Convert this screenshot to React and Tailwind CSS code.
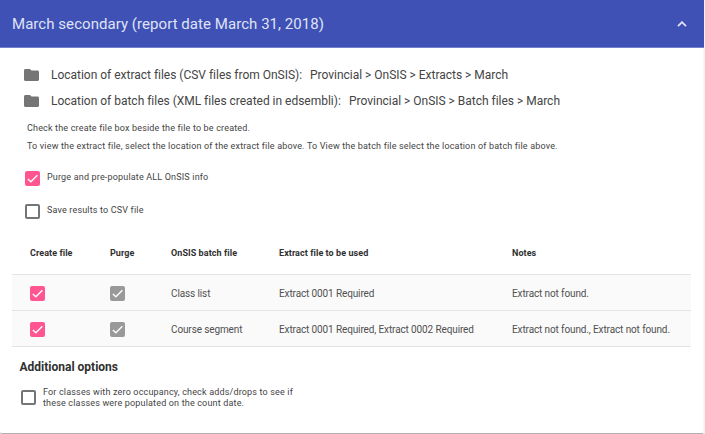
const tick = 'M4.6 12.7 9.400 17.2 19.8 6.8';

function Checkbox({ checked, muted }) {
  if (!checked) {
    return <span className="block size-[15px] shrink-0 rounded-[2px] border-2 border-[#757575] bg-white" />;
  }
  return (
    <span className={`block size-[15px] shrink-0 rounded-[2px] ${muted ? 'bg-[#999999]' : 'bg-[#ff5590]'}`}>
      <svg viewBox="0 0 24 24" className="size-[15px]" fill="none" stroke="#fafafa" strokeWidth="2.4">
        <path d={tick} />
      </svg>
    </span>
  );
}

function Folder() {
  return (
    <svg viewBox="2 4 20 16" preserveAspectRatio="none" className="h-3 w-[15px] shrink-0" fill="#757575">
      <path d="M10 4H4c-1.1 0-2 .9-2 2v12c0 1.1.9 2 2 2h16c1.1 0 2-.9 2-2V8c0-1.100-.9-2-2-2h-8l-2-2z" />
    </svg>
  );
}

const locations = [
  { label: 'Location of extract files (CSV files from OnSIS):', path: 'Provincial > OnSIS > Extracts > March', left: 'w-[259px]' },
  { label: 'Location of batch files (XML files created in edsembli):', path: 'Provincial > OnSIS > Batch files > March', left: 'w-[298px]' },
];

const rows = [
  ['Class list', 'Extract 0001 Required', 'Extract not found.'],
  ['Course segment', 'Extract 0001 Required, Extract 0002 Required', 'Extract not found., Extract not found.'],
];

const columns = 'grid grid-cols-[80px_61px_108px_233px_1fr] items-center pl-[18px]';

export default function App() {
  return (
    <div className="h-[434px] w-[705px] overflow-hidden bg-[#f0f0f0] font-['Roboto',sans-serif] whitespace-nowrap text-[#444444]">
      <section className="flex h-[434px] w-[704px] flex-col rounded-b-[2px] border-r border-b border-r-[#f5f5f5] border-b-[#b0b0b0] bg-white">
        <header className="flex h-12 w-[704px] shrink-0 items-center justify-between border-b border-[#7482d0] bg-[#3f51b5] pr-[17px] pl-3 text-[#dfe3f5]">
          <h1 className="pt-px text-[15px] tracking-[0.05px]">March secondary (report date March 31, 2018)</h1>
          <svg viewBox="0 0 10 6" className="h-1.5 w-2.5" fill="none" stroke="currentColor" strokeWidth="1.8">
            <path d="m1 5.200 4-4 4 4" />
          </svg>
        </header>
        <div className="mt-[14px] flex flex-col pl-6">
          {locations.map((l) => (
            <div key={l.label} className="flex h-[26px] items-center text-[12px] tracking-[-0.015px]">
              <Folder />
              <span className={`ml-3 ${l.left}`}>{l.label}</span>
              <span>{l.path}</span>
            </div>
          ))}
        </div>
        <div className="mt-[5px] pl-[27px] text-[9px] leading-[18px] tracking-[0.17px]">
          <p>Check the create file box beside the file to be created.</p>
          <p>To view the extract file, select the location of the extract file above. To View the batch file select the location of batch file above.</p>
        </div>
        <div className="mt-[16px] flex flex-col gap-[18px] pl-[25px] text-[9px] leading-[12px] tracking-[0.17px]">
          <label className="flex gap-[7px]"><Checkbox checked /><span>Purge and pre-populate ALL OnSIS info</span></label>
          <label className="flex gap-[7px]"><Checkbox /><span>Save results to CSV file</span></label>
        </div>
        <div className="mt-[14px] mr-3 ml-3">
          <div className={`${columns} h-[41px] pt-px text-[9px] font-bold tracking-[0.07px] text-[#303030]`}>
            <span>Create file</span><span>Purge</span><span>OnSIS batch file</span><span>Extract file to be used</span><span>Notes</span>
          </div>
          {rows.map((r) => (
            <div key={r[0]} className={`${columns} h-9 border-t border-[#e4e4e4] bg-[#fafafa] pt-px text-[10px] tracking-[-0.12px] text-[#505050]`}>
              <Checkbox checked /><Checkbox checked muted /><span>{r[0]}</span><span>{r[1]}</span><span>{r[2]}</span>
            </div>
          ))}
          <div className="h-px bg-[#e4e4e4]" />
        </div>
        <h2 className="mt-3 pl-[19.5px] text-[12px] leading-4 font-bold text-[#303030]">Additional options</h2>
        <label className="mt-3 flex gap-[7px] pl-[21px] text-[9px] leading-[11px] tracking-[0.17px]">
          <span className="pt-[3px]"><Checkbox /></span>
          <span>For classes with zero occupancy, check adds/drops to see if<br />these classes were populated on the count date.</span>
        </label>
      </section>
    </div>
  );
}
